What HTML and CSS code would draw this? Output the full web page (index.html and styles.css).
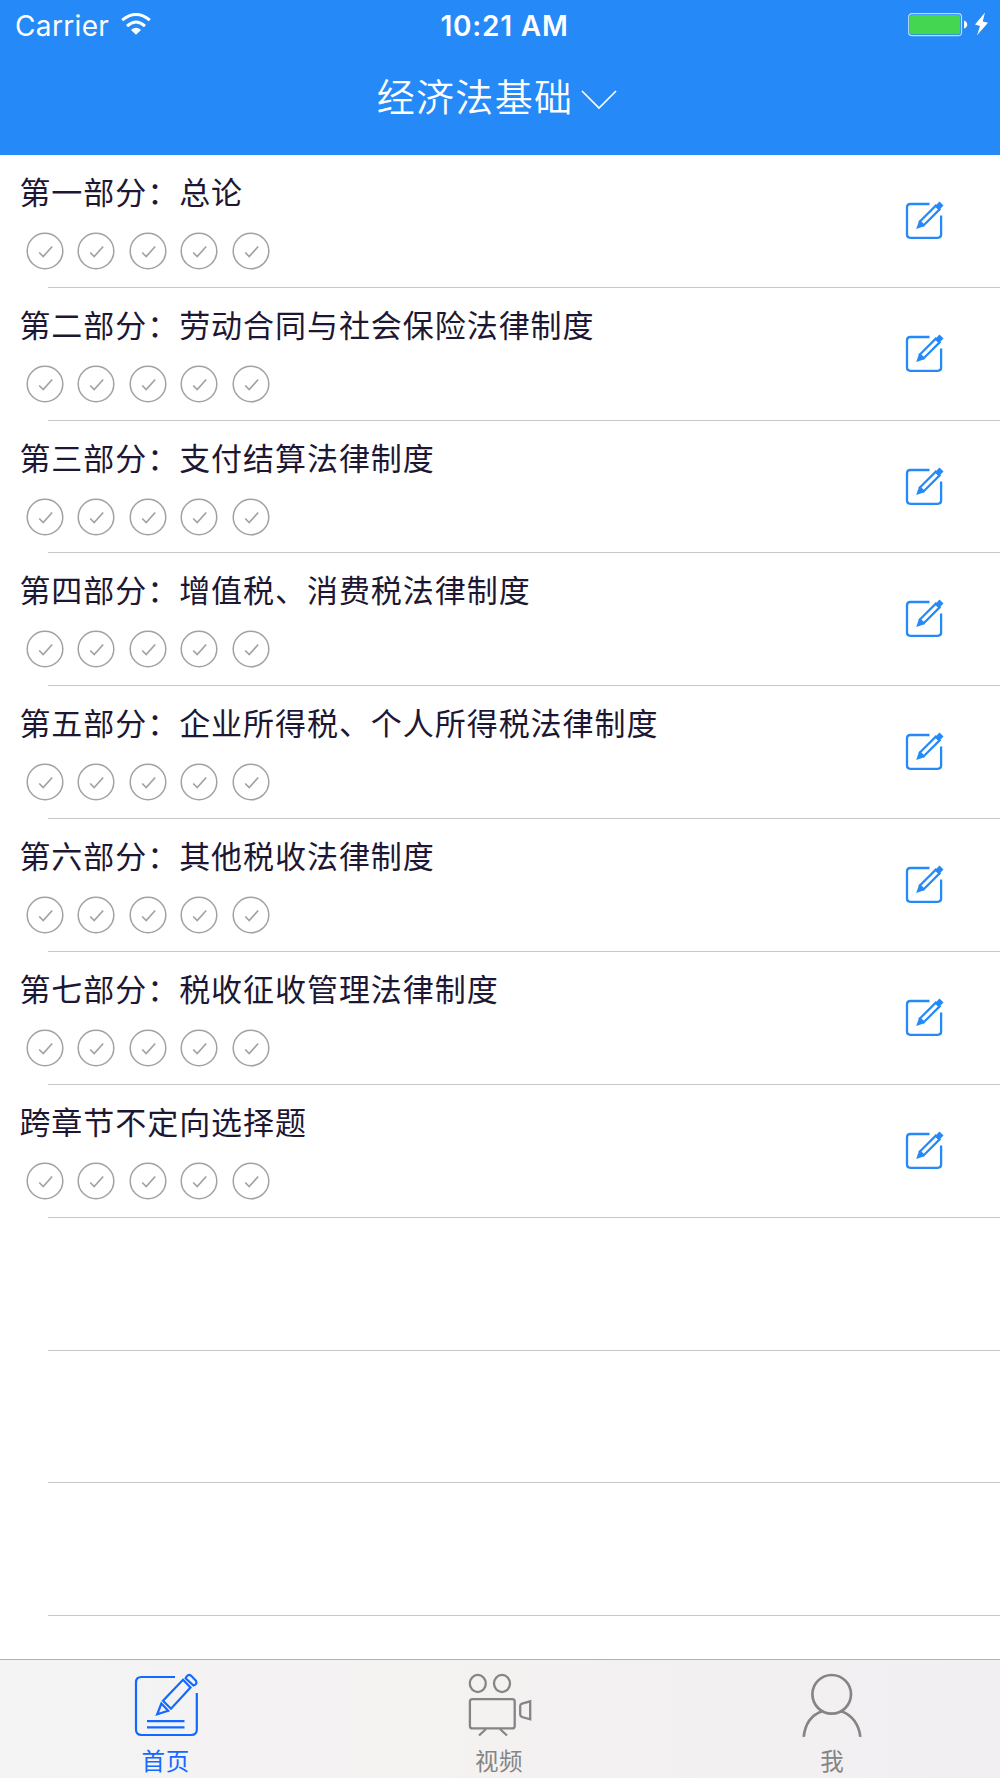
FILE: index.html
```html
<!DOCTYPE html>
<html lang="zh-CN">
<head>
<meta charset="utf-8">
<title>经济法基础</title>
<link rel="stylesheet" href="styles.css">
</head>
<body>
<svg width="0" height="0" class="defs" aria-hidden="true">
  <symbol id="check" viewBox="0 0 38 38"><g fill="none" stroke="#a2a2a2"><circle cx="19" cy="19" r="17.8" stroke-width="1.5"/><path d="M13.200 20.500l4 4 9-10" stroke-width="1.700"/></g></symbol>
  <symbol id="edit" viewBox="0 0 40 40"><g fill="none" stroke="#2589f8" stroke-width="2.300"><path d="M24.500 4H5.200Q2 4 2 7.200V34.600Q2 37.800 5.200 37.800H32.900Q36.100 37.800 36.100 34.600V15.500"/><path d="M14.900 21.500L30.800 5.600 34.600 9.400 18.700 25.300Z" stroke-width="2.200"/><path d="M32.200 3.900L36.200 7.900" stroke-width="6.500"/></g><path d="M14.200 20.200l5.800 5.800L11.200 28.900Z" fill="#2589f8"/></symbol>
</svg>
<div class="screen">
  <header class="header">
    <div class="status">
      <div class="carrier"><span>Carrier</span>
        <svg width="30" height="22" viewBox="0 0 30 22"><g fill="none" stroke="#fff" stroke-width="3"><path d="M1.200 7.200Q15 -4.200 28.800 7.200"/><path d="M6 13.100Q15 5 24 13.100"/></g><path d="M10 17Q15 12.500 20 17L15 21.700Z" fill="#fff"/></svg>
      </div>
      <div class="time">10:21 AM</div>
      <div class="battery">
        <svg width="82" height="26" viewBox="0 0 82 26"><rect x=".7" y="1.600" width="52.800" height="22" rx="3.200" fill="none" stroke="#b9dcff" stroke-width="1.200"/><rect x="2" y="3" width="50.200" height="19.300" rx="1.800" fill="#44d551"/><path d="M56 8.500q3.200 1 3.200 4t-3.200 4z" fill="#fff"/><path d="M77 .5L67 12.500l5 1.500-3 9.300L80 10.800l-5.300-1.300z" fill="#fff"/></svg>
      </div>
    </div>
    <div class="nav"><h1>经济法基础</h1><svg width="36" height="20" viewBox="0 0 36 20"><path d="M1 1l17 17L35 1" fill="none" stroke="#fff" stroke-width="1.700"/></svg></div>
  </header>
  <main class="list" id="list"></main>
  <nav class="tabs">
    <div class="tab active">
      <svg width="66" height="66" viewBox="0 0 66 66"><g fill="none" stroke="#1268ff" stroke-width="2.200"><path d="M42 5H8.500Q3 5 3 10.500V57.500Q3 63 8.500 63H58.300Q63.800 63 63.800 57.500V21"/><path d="M50 7.800L57.500 15.600 38 36.700 30 28.700Z"/><path d="M28.400 31.500L24.200 42.300 35.200 38.700Z"/><path d="M52.600 6.200Q54.800 1.300 58.200 3.800L63 8.800Q64.500 12.400 60.500 13.500Z"/><path d="M14 49.200H51.500M14 55.400H51.500"/></g></svg>
      <span>首页</span>
    </div>
    <div class="tab">
      <svg width="66" height="66" viewBox="0 0 66 66"><g fill="none" stroke="#858585" stroke-width="2.300"><ellipse cx="11.800" cy="11.500" rx="8" ry="8.600"/><ellipse cx="36" cy="11.500" rx="8" ry="8.600"/><rect x="3.900" y="27.200" width="44.800" height="29.200" rx="2.500"/><path d="M64.200 29.300V47.300L56 45Q54.200 44 54.200 42.500V34Q54.200 32.300 56 31.600ZM20 57L13 63.500M34 57L41 63.500"/></g></svg>
      <span>视频</span>
    </div>
    <div class="tab">
      <svg width="66" height="66" viewBox="0 0 66 66"><g fill="none" stroke="#858585" stroke-width="2.700"><circle cx="32.700" cy="22.300" r="19.300"/><path d="M4.700 64.800C6 53 12 43 23.200 39.200M42.200 39.200C53.500 43 60 53 61.300 64.800"/></g></svg>
      <span>我</span>
    </div>
  </nav>
</div>
<script src="app.js"></script>
</body>
</html>
```
FILE: styles.css
```css
* { box-sizing: border-box; }
body { margin: 0; background: #fff; font-family: Inter, "Noto Sans CJK SC", sans-serif; }
.defs { position: absolute; }
.screen { width: 1000px; height: 1778px; display: flex; flex-direction: column; overflow: hidden; }
.header { height: 154.8px; flex: none; background: #2589f8; color: #fff; }
.status { height: 50px; display: grid; grid-template-columns: 1fr auto 1fr; align-items: center; padding: 0 10px 0 15px; font-size: 28px; }
.carrier { display: flex; align-items: center; gap: 12px; letter-spacing: 0.35px; }
.carrier span { padding-top: 1px; }
.carrier svg { margin-top: -3px; }
.time { font-weight: 600; letter-spacing: 0.8px; padding: 2px 0 0 4px; }
.battery { display: flex; justify-content: flex-end; }
.nav { height: 94px; display: flex; align-items: center; justify-content: center; gap: 8px; padding-right: 6px; }
.nav h1 { margin: 0; font-size: 38px; line-height: 48px; font-weight: 350; letter-spacing: 1.3px; }
.nav svg { margin-top: 5px; }
.list { flex: 1; min-height: 0; overflow: hidden; }
.row { height: 132.87px; display: flex; justify-content: space-between; padding: 18px 55px 0 19.4px; background: linear-gradient(#c8c8cb, #c8c8cb) 48px 100% / 100% 1px no-repeat; }
.row h2 { margin: 0; font-size: 31px; line-height: 40px; font-weight: 400; letter-spacing: 0.95px; color: #1d1734; white-space: nowrap; }
.checks { display: flex; gap: 13.4px; margin: 19px 0 0 6.7px; }
.checks svg { width: 38px; height: 38px; }
.edit { width: 40px; height: 40px; margin-top: 27px; }
.tabs { height: 119px; flex: none; display: grid; grid-template-columns: repeat(3, 1fr); border-top: 1px solid #b2b2b2; background: linear-gradient(90deg, #f4f4f4, #f4f1f1 50%, #f1eff1); }
.tab { display: flex; flex-direction: column; align-items: center; padding: 12px 2px 0 0; color: #858585; font-size: 23.5px; }
.tab span { line-height: 30px; margin-top: 9px; letter-spacing: 0.6px; font-weight: 400; }
.tab.active { color: #1268ff; }
```
FILE: app.js
```js
const chapters = [
  '第一部分：总论',
  '第二部分：劳动合同与社会保险法律制度',
  '第三部分：支付结算法律制度',
  '第四部分：增值税、消费税法律制度',
  '第五部分：企业所得税、个人所得税法律制度',
  '第六部分：其他税收法律制度',
  '第七部分：税收征收管理法律制度',
  '跨章节不定向选择题'
];
const check = '<svg><use href="#check"/></svg>';
const rows = chapters.map(name =>
  `<section class="row"><div><h2>${name}</h2><div class="checks">${check.repeat(5)}</div></div><svg class="edit"><use href="#edit"/></svg></section>`);
const blanks = '<div class="row"></div>'.repeat(3);
document.getElementById('list').innerHTML = rows.join('') + blanks;
```
